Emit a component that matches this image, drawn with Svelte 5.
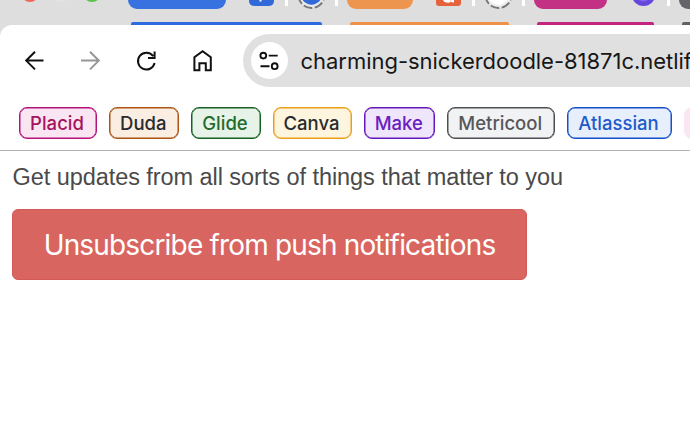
<script>
  const bookmarks = [
    { name: 'Placid', w: 78.5, color: '#a5145f', line: '#b5127b', bg: '#fae6f2' },
    { name: 'Duda', w: 70, color: '#292b2e', line: '#ae5313', bg: '#faeee2' },
    { name: 'Glide', w: 69.5, color: '#236b2c', line: '#176123', bg: '#e7f3e9' },
    { name: 'Canva', w: 79.5, color: '#292b2e', line: '#eba01c', bg: '#fef5df' },
    { name: 'Make', w: 71, color: '#6a20bd', line: '#6517bb', bg: '#f0e6fb' },
    { name: 'Metricool', w: 108, color: '#55575a', line: '#4d4e51', bg: '#f1f2f4' },
    { name: 'Atlassian', w: 104.5, color: '#205bcb', line: '#1550cb', bg: '#e8effc' }
  ];
</script>

<div class="window">
  <div class="tabs">
    <div class="lights"><i class="red"></i><i></i><i class="green"></i></div>
    <div class="group" style:width="207px">
      <div class="row">
        <span class="pill" style:width="98px" style:background="#3871e0"></span>
        <svg style:margin-left="23px" width="25" height="7"><path d="M0 0H25V1Q25 6 19 6H6Q0 6 0 1Z" fill="#3269d9"/><path d="M11.5 0V1.5" stroke="#fff" stroke-width="2"/></svg>
        <i class="sep" style:margin-left="11px"></i>
        <svg style:margin-left="9px" width="29" height="10"><circle cx="14.5" cy="-5" r="13" fill="#e8e8e8" stroke="#777" stroke-width="1.9" stroke-dasharray="9 2.5" stroke-dashoffset="3.5"/><circle cx="14.5" cy="-6" r="10.7" fill="#3269d9"/></svg>
        <i class="sep" style:margin-left="9px"></i>
      </div>
      <b style:width="191px" style:background="#2e6be0"></b>
    </div>
    <div class="group" style:width="175px" style:margin-left="12px">
      <div class="row">
        <span class="pill" style:width="66px" style:background="#ed954f"></span>
        <svg style:margin-left="23px" width="25" height="7"><path d="M0 0H25V3Q25 6 22 6H3Q0 6 0 3Z" fill="#e5633c"/><path d="M7 0Q8 2.8 12 2.8Q14 2.8 15 1.5Q16 2.8 18 2.2V0H15V.8L14 0Z" fill="#fff"/></svg>
        <i class="sep" style:margin-left="11px"></i>
        <svg style:margin-left="9px" width="29" height="10"><circle cx="14.5" cy="-5" r="13" fill="#eee" stroke="#777" stroke-width="1.9" stroke-dasharray="9 2.5" stroke-dashoffset="3.5"/><circle cx="14.5" cy="-6" r="10.7" fill="#fff"/></svg>
        <i class="sep" style:margin-left="9px"></i>
      </div>
      <b style:width="159px" style:background="#ef9147"></b>
    </div>
    <div class="group" style:width="136px" style:margin-left="12px">
      <div class="row">
        <span class="pill" style:width="73px" style:background="#c23184"></span>
        <svg style:margin-left="24px" width="25" height="7"><circle cx="12.5" cy="-6" r="12" fill="#6547dc"/><path d="M8 0Q12 3 17 0" fill="#8065ef"/></svg>
        <i class="sep" style:margin-left="11px"></i>
      </div>
      <b style:width="117px" style:background="#c32482"></b>
    </div>
    <div class="group" style:width="80px" style:margin-left="9px">
      <div class="row"><span class="pill" style:width="80px" style:background="#646568"></span></div>
      <b style:width="77px" style:background="#5f6062"></b>
    </div>
  </div>

  <div class="toolbar">
    <svg class="nav" width="230" height="70" fill="none" stroke="#111" stroke-width="2">
      <path d="M43.5 35.6H26.5M35 26.8L26.2 35.6L35 44.4"/>
      <path stroke="#969696" d="M81 35.6H98M90 26.8L98.8 35.6L90 44.4"/>
      <path d="M153.2 31.2A8.4 8.4 0 1 0 154.6 38M154.6 26.5V33H148"/>
      <path d="M194.4 45.2V32.3L202.6 26.2L210.8 32.3V45.2H205.8V38.3H199.4V45.2Z"/>
    </svg>
    <div class="address">
      <span class="site">
        <svg width="38" height="38" fill="none" stroke="#111" stroke-width="1.9">
          <circle cx="13.3" cy="13.6" r="2.9"/><path d="M18.7 13.6H27.7M10.5 24.2H19.5"/><circle cx="24.7" cy="24.2" r="2.9"/>
        </svg>
      </span>
      <span class="url">charming-snickerdoodle-81871c.netlif</span>
    </div>
  </div>

  <div class="bookmarks">
    {#each bookmarks as b}
      <span class="chip" style:width="{b.w}px" style:color={b.color} style:--line={b.line} style:background={b.bg}>{b.name}</span>
    {/each}
    <span class="chip more"></span>
  </div>

  <main>
    <p>Get updates from all sorts of things that matter to you</p>
    <button>Unsubscribe from push notifications</button>
  </main>
</div>

<style>
  .window { width: 690px; height: 426px; overflow: hidden; background: #fff; font-family: Inter, sans-serif; }
  .tabs { display: flex; height: 37px; margin-bottom: -12px; background: #dedede; overflow: hidden; }
  .lights { width: 128px; flex: none; box-sizing: border-box; padding-left: 21px; display: flex; gap: 13px; }
  .lights i { width: 18px; height: 18px; margin-top: -16px; border-radius: 50%; background: #e3e3e3; }
  .lights .red { background: #f3655a; }
  .lights .green { background: #58c346; }
  .group { flex: none; height: 25px; display: flex; flex-direction: column; justify-content: space-between; }
  .row { display: flex; align-items: flex-start; height: 10px; }
  .row svg { display: block; flex: none; }
  .pill { flex: none; height: 9px; border-radius: 0 0 9px 9px; }
  .sep { flex: none; width: 3px; height: 6px; background: #fff; }
  .group b { height: 3px; margin-left: 3px; border-radius: 2px 2px 0 0; }
  .toolbar { position: relative; display: flex; height: 70px; background: #fff; border-top-left-radius: 12px; }
  .nav { flex: none; margin-right: 13px; }
  .address { flex: none; display: flex; align-items: center; width: 500px; height: 53px; margin-top: 9px; border-radius: 27px; background: #e0e0e0; }
  .site { width: 37.5px; height: 37.5px; margin-left: 7.5px; border-radius: 50%; background: #fff; }
  .site svg { display: block; margin-left: -0.5px; }
  .url { margin-left: 12.5px; font-size: 22px; letter-spacing: -0.03px; color: #171717; white-space: nowrap; }
  .bookmarks { display: flex; gap: 12px; box-sizing: border-box; height: 56px; padding: 12px 0 0 18.5px; border-bottom: 1px solid #b3b3b3; }
  .chip { flex: none; display: flex; justify-content: center; box-sizing: border-box; height: 32px; padding-right: 1.5px; border: 1px solid var(--line); border-radius: 8px; box-shadow: inset 0 0 0 0.5px var(--line); font-size: 18.5px; line-height: 30px; font-weight: 500; white-space: nowrap; }
  .more { width: 60px; --line: #fae6f2; background: #fae6f2; }
  main { padding: 12px 12px 0; }
  p { margin: 0 0 0 0.5px; height: 46px; font: 23.5px/28px "Liberation Sans", Arial, sans-serif; letter-spacing: -0.06px; color: #4a4a4a; white-space: nowrap; }
  button { display: block; width: 515px; height: 71px; padding: 0; border: 1px solid #d5595a; border-radius: 6px; background: #d96560; color: #fff; font: 28px Inter, sans-serif; letter-spacing: -0.83px; white-space: nowrap; }
</style>
